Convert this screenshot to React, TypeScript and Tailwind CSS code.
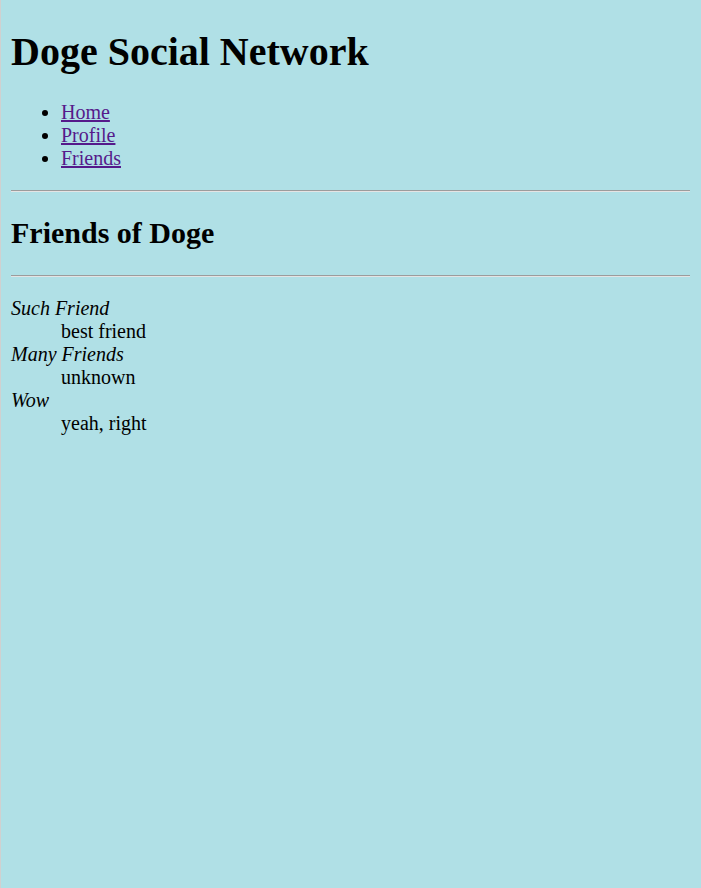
import React from 'react';

const links = ['Home', 'Profile', 'Friends'];

const friends = [
  { name: 'Such Friend', note: 'best friend' },
  { name: 'Many Friends', note: 'unknown' },
  { name: 'Wow', note: 'yeah, right' }
];

const Rule: React.FC = () => (
  <hr className="h-0 border-0 border-t border-b border-t-[#9c9c9c] border-b-[#e4e4e4]" />
);

const App: React.FC = () => {
  return (
    <div className="min-h-screen bg-[#b0e0e6] border-l border-[#d0d0d0] pt-[29px] pl-[10px] pr-[11px] font-['Liberation_Serif',serif] text-[20px] leading-[23px] text-black">
      <h1 className="m-0 text-[40px] leading-[46px] font-bold">Doge Social Network</h1>

      <ul className="mt-[26px] mb-[20px] pl-[50px] list-disc">
        {links.map(link => (
          <li key={link}>
            <a href="#" className="text-[#551a8b] underline">
              {link}
            </a>
          </li>
        ))}
      </ul>

      <Rule />

      <h2 className="mt-[24px] mb-[24px] text-[30px] leading-[34.5px] font-bold">Friends of Doge</h2>

      <Rule />

      {/* friends list */}
      <dl className="mt-[20px]">
        {friends.map(f => (
          <React.Fragment key={f.name}>
            <dt className="italic">{f.name}</dt>
            <dd className="ml-[50px]">{f.note}</dd>
          </React.Fragment>
        ))}
      </dl>
    </div>
  );
};

export default App;
